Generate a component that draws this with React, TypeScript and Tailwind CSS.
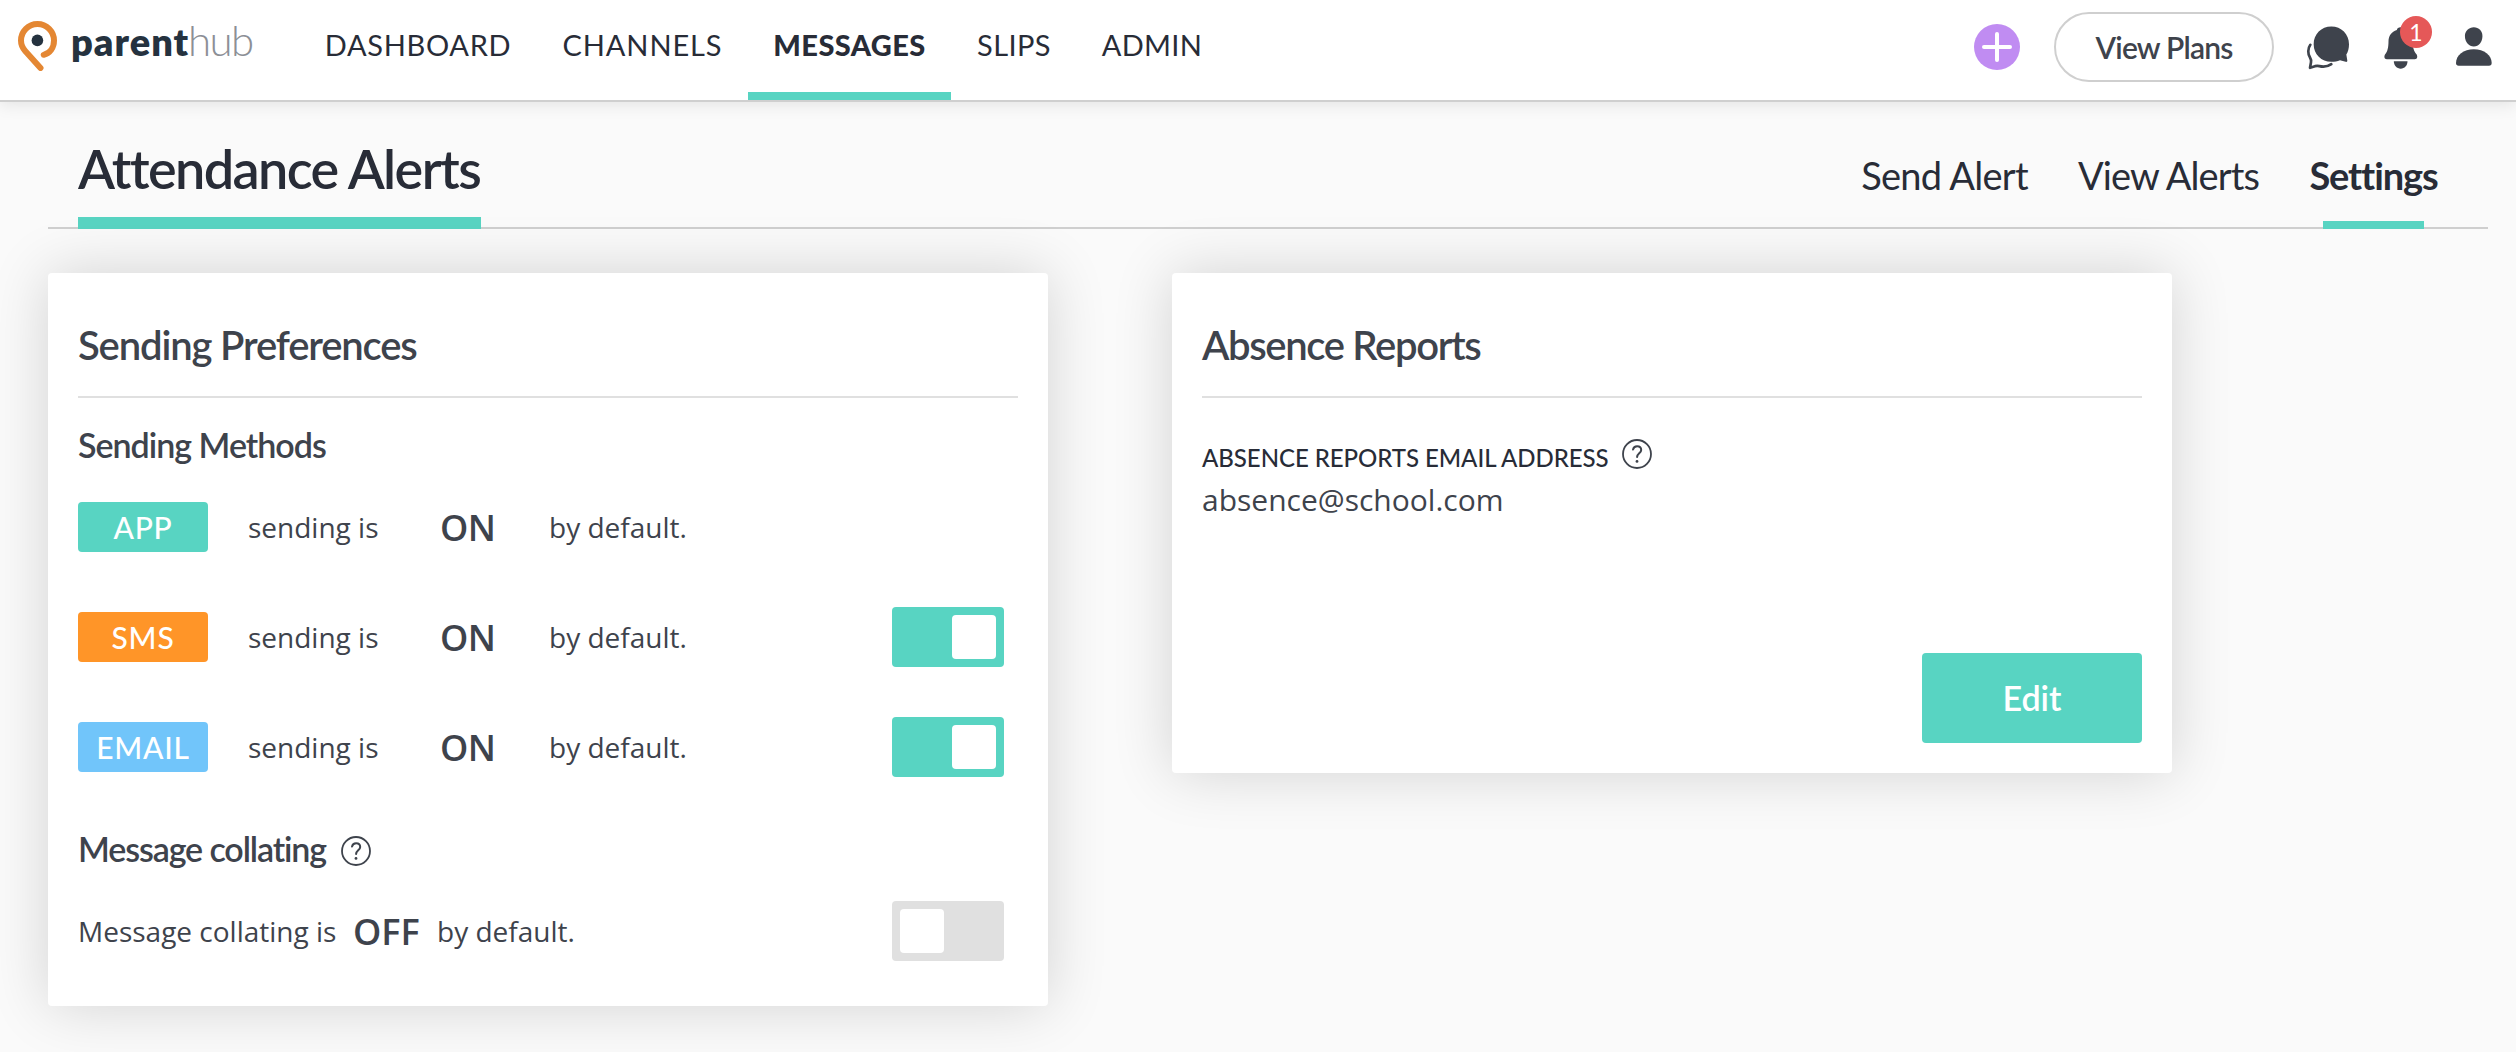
import type { ReactNode } from 'react'

const navItems = [
  { label: 'DASHBOARD', className: 'w-[238px] tracking-[0.7px] border-transparent' },
  { label: 'CHANNELS', className: 'w-[211px] tracking-[0.9px] border-transparent' },
  { label: 'MESSAGES', className: 'w-[203px] tracking-[0.4px] font-black border-[#58d4c2]' },
  { label: 'SLIPS', className: 'w-[125px] pl-px tracking-[0.4px] border-transparent' },
  { label: 'ADMIN', className: 'w-[152px] tracking-[0.3px] border-transparent' },
]

const tabs = [
  { label: 'Send Alert', className: 'w-[165px] tracking-[-0.7px]', active: false },
  { label: 'View Alerts', className: 'w-[179px] tracking-[-0.9px]', active: false },
  { label: 'Settings', className: 'w-[127px] tracking-[-1.1px] font-bold', active: true },
]

const methods = [
  { label: 'APP', color: 'bg-[#58d4c2]', toggle: false },
  { label: 'SMS', color: 'bg-[#ff9528]', toggle: true },
  { label: 'EMAIL', color: 'bg-[#71c5fa]', toggle: true },
]

function Logo() {
  return (
    <div className="flex items-start w-[281px] h-full pt-[21px]">
      <svg width="40" height="50" viewBox="0 0 40 50" fill="none" className="shrink-0">
        <path
          d="M25.7 33.8C32 32.2 36 26.5 36 19.5A16.5 16.5 0 0 0 3 19.5C3 24 4.6 27 7.2 29.9L22.5 47"
          stroke="#e48733"
          strokeWidth="6"
          strokeLinecap="round"
        />
        <circle cx="19.4" cy="19.4" r="5.8" fill="#25323f" />
      </svg>
      <div className="flex items-baseline ml-[13px] leading-[44px] -mt-[3px]">
        <span className="w-[117px] text-[38px] font-extrabold tracking-[1px] text-[#25323f]">parent</span>
        <span className="text-[42px] font-light tracking-[-1.6px] text-[#8c8f96]">hub</span>
      </div>
    </div>
  )
}

function HelpIcon({ className }: { className?: string }) {
  return (
    <svg width="30" height="30" viewBox="0 0 30 30" fill="none" stroke="#3e434c" className={className}>
      <circle cx="15" cy="15" r="14" strokeWidth="1.8" />
      <path d="M11 10.6c.5-2.2 2-3.4 4.1-3.4 2.4 0 4.1 1.5 4.1 3.7 0 3.3-4.1 3.6-4.1 7.2" strokeWidth="2" strokeLinecap="round" />
      <circle cx="15" cy="22.4" r="1.4" fill="#3e434c" stroke="none" />
    </svg>
  )
}

function ChatIcon() {
  return (
    <svg width="45" height="47" viewBox="105 70 135 140" fill="none">
      <path
        d="M184 77c30 0 53 23 53 53 0 13-3 23-8 31l3 19c0 3-2 4-5 3l-17-5c-8 3-16 5-26 5-30 0-53-23-53-53s23-53 53-53z"
        fill="#3e434c"
      />
      <path
        d="M121 132c-8 11-8 27-1 38 3 5 4 9 3 14l-3 17 15-5c5-1 9-1 13 0 13 3 26 1 36-6"
        stroke="#3e434c"
        strokeWidth="8"
        strokeLinecap="round"
        strokeLinejoin="round"
      />
    </svg>
  )
}

function BellIcon() {
  return (
    <svg width="37" height="45" viewBox="335 75 110 135" fill="#3e434c">
      <path d="M390 82c-6 0-10 3-11 8-16 5-25 18-25 34 0 19-3 31-10 39-4 6-3 15 5 15h84c8 0 9-9 5-15-7-8-12-20-12-39 0-16-9-29-25-34-1-5-5-8-11-8z" />
      <path d="M370 184h41c0 13-9 22-20.500 22s-20.500-9-20.500-22z" />
    </svg>
  )
}

function UserIcon() {
  return (
    <svg width="38" height="42" viewBox="555 80 115 125" fill="#3e434c">
      <path d="M612 83c15 0 26 11 26 26 0 18-11 32-26 32s-27-14-27-32c0-15 12-26 27-26z" />
      <path d="M612 149c31 0 54 18 54 42 0 6-3 8-8 8h-92c-5 0-8-2-8-8 0-24 23-42 54-42z" />
    </svg>
  )
}

function Toggle({ on }: { on: boolean }) {
  return (
    <div className={`flex w-28 h-[60px] p-2 rounded ml-auto mr-[14px] ${on ? 'justify-end bg-[#58d4c2]' : 'justify-start bg-[#e0e0e0]'}`}>
      <div className="size-11 rounded bg-white" />
    </div>
  )
}

function Card({ title, titleClass, className, children }: { title: string; titleClass: string; className: string; children: ReactNode }) {
  return (
    <section className={`w-[1000px] px-[30px] rounded bg-white shadow-[0_0_60px_rgba(0,0,0,0.16)] ${className}`}>
      <h2 className={`flex items-center h-[125px] pt-5 border-b-2 border-[#e0e0e0] text-[40px] font-semibold ${titleClass}`}>{title}</h2>
      {children}
    </section>
  )
}

export default function App() {
  return (
    <div className="w-[2516px] h-[1052px] overflow-hidden bg-[#fafafa] text-[#3e434c] font-['Lato',sans-serif] whitespace-nowrap [font-variant-ligatures:none]">
      <header className="flex h-[102px] pl-[18px] pr-[23px] border-b-2 border-[#cfcfcf] bg-white shadow-[0_2px_16px_rgba(0,0,0,0.1)]">
        <Logo />
        <nav className="flex h-full text-[29px] text-[#282c37]">
          {navItems.map((item) => (
            <a key={item.label} className={`flex items-center justify-center h-full pb-[2px] border-b-8 ${item.className}`}>
              {item.label}
            </a>
          ))}
        </nav>
        <div className="flex items-center h-[94px] ml-auto">
          <button className="flex items-center justify-center size-[46px] rounded-full bg-[#c08cf2]">
            <svg width="30" height="30" viewBox="0 0 30 30" stroke="#fff" strokeWidth="4" strokeLinecap="round">
              <path d="M15 2v26M2 15h26" />
            </svg>
          </button>
          <button className="w-[220px] h-[70px] ml-[34px] mr-[31px] rounded-full border-2 border-[#cfcfcf] text-[30px] font-semibold tracking-[-0.8px]">
            View Plans
          </button>
          <ChatIcon />
          <div className="relative ml-8 mr-9 mt-px">
            <BellIcon />
            <span className="absolute -top-[9px] left-[18px] flex items-center justify-center size-8 rounded-full bg-[#e55858] text-[23px] text-white">
              1
            </span>
          </div>
          <UserIcon />
        </div>
      </header>

      <main className="pl-12 pr-7">
        <div className="flex justify-between h-[127px] pl-[30px] pr-[51px] border-b-2 border-[#cfcfcf] text-[#282c37]">
          <h1 className="flex items-center w-[403px] h-[127px] pt-[18px] border-b-[12px] border-[#58d4c2] text-[54px] font-semibold tracking-[-1.6px]">
            Attendance Alerts
          </h1>
          <div className="flex gap-[52px] h-[127px] text-[38px]">
            {tabs.map((tab) => (
              <a key={tab.label} className={`flex flex-col items-center h-full ${tab.className}`}>
                <span className="flex flex-1 items-center pt-[27px]">{tab.label}</span>
                <span className={`w-[101px] h-2 ${tab.active ? 'bg-[#58d4c2]' : ''}`} />
              </a>
            ))}
          </div>
        </div>

        <div className="flex items-start gap-[124px] mt-11">
          <Card title="Sending Preferences" titleClass="tracking-[-1.15px]" className="h-[733px]">
            <h3 className="flex items-center h-[74px] pt-[18px] text-[34px] font-semibold tracking-[-1px]">Sending Methods</h3>
            {methods.map((m) => (
              <div key={m.label} className="flex items-center h-[110px] font-['Open_Sans',sans-serif] text-[28px]">
                <span className={`flex items-center justify-center w-[130px] h-[50px] mr-10 rounded font-['Lato',sans-serif] text-[30px] font-medium tracking-[0.8px] text-white ${m.color}`}>
                  {m.label}
                </span>
                <span className="w-48">sending is</span>
                <strong className="w-[109px] pt-px text-[36px] font-semibold tracking-[-0.5px]">ON</strong>
                <span>by default.</span>
                {m.toggle && <Toggle on />}
              </div>
            ))}
            <h3 className="flex items-center h-[99px] pb-[6px] text-[34px] font-semibold">
              <span className="w-[263px] tracking-[-1.1px]">Message collating</span>
              <HelpIcon className="mt-1" />
            </h3>
            <div className="flex items-center h-[60px] font-['Open_Sans',sans-serif] text-[28px]">
              <span className="w-[275px]">Message collating is</span>
              <strong className="w-[84px] pt-px text-[36px] font-semibold">OFF</strong>
              <span>by default.</span>
              <Toggle on={false} />
            </div>
          </Card>

          <Card title="Absence Reports" titleClass="tracking-[-1.35px]" className="flex flex-col h-[500px]">
            <div className="flex items-center h-10 mt-[39px]">
              <span className="w-[420px] pt-px text-[24px] font-medium tracking-[-0.05px] text-[#282c37]">ABSENCE REPORTS EMAIL ADDRESS</span>
              <HelpIcon className="mb-[6px]" />
            </div>
            <div className="h-[45px] leading-[45px] font-['Open_Sans',sans-serif] text-[30px]">absence@school.com</div>
            <button className="w-[220px] h-[90px] mt-auto mb-[30px] ml-auto pb-px rounded bg-[#58d4c2] text-[34px] font-semibold text-white">
              Edit
            </button>
          </Card>
        </div>
      </main>
    </div>
  )
}
